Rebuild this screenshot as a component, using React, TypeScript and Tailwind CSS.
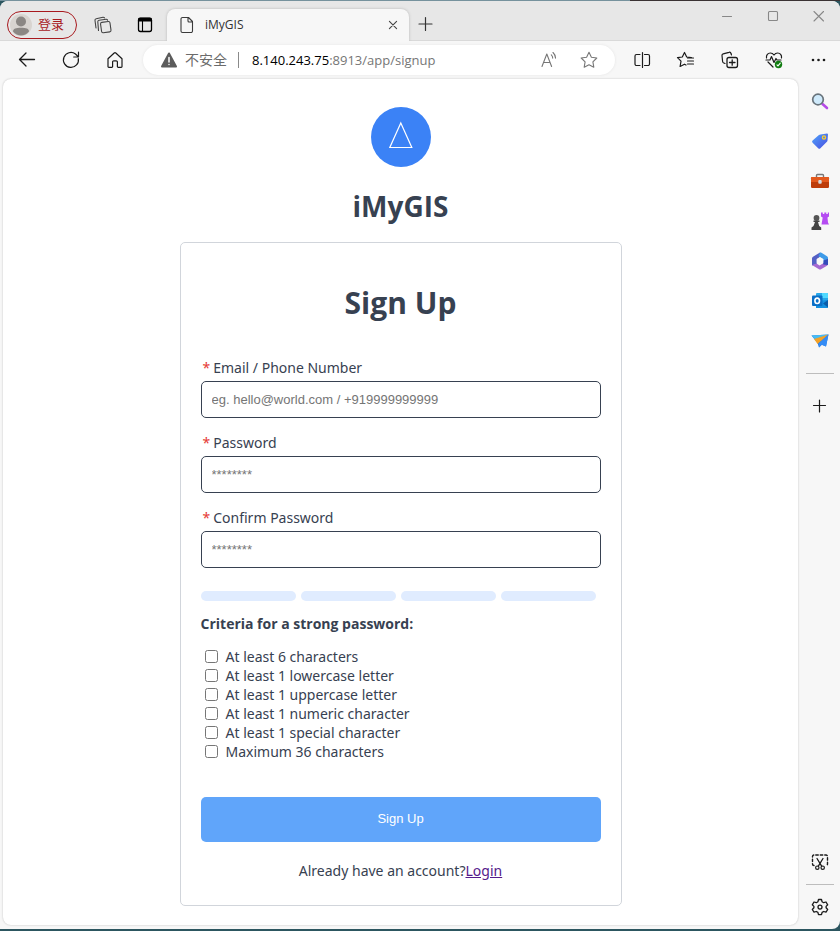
import type { ReactNode } from "react";

function Icon({ children, size = 20, color = "#1b1b1b" }: { children: ReactNode; size?: number; color?: string }) {
  return (
    <svg
      width={size}
      height={size}
      viewBox="0 0 20 20"
      fill="none"
      stroke={color}
      strokeWidth={1.1}
      strokeLinecap="round"
      strokeLinejoin="round"
      aria-hidden="true"
      className="shrink-0"
    >
      {children}
    </svg>
  );
}

function ToolButton({ label, children }: { label: string; children: ReactNode }) {
  return (
    <button type="button" aria-label={label} className="flex h-9 w-11 shrink-0 items-center justify-center">
      {children}
    </button>
  );
}

function TitleBar() {
  return (
    <header className="flex h-10 items-stretch border-b border-[#d9d9d9] bg-[#e7e7e7] pl-[7px]">
      <button
        type="button"
        className="mt-[10px] flex h-7 w-[70px] shrink-0 items-center gap-[6px] rounded-full border border-[#a8191e] pl-[2px] text-[13px] text-[#a8191e]"
      >
        <svg width="22" height="22" viewBox="0 0 22 22" aria-hidden="true">
          <circle cx="11" cy="11" r="11" fill="#d8d4d0" />
          <circle cx="11" cy="7.500" r="5" fill="#8b8784" />
          <path d="M3 17.500c0-3 3-3.800 8-3.800s8 .8 8 3.800c-2 2.600-5 4-8 4s-6-1.400-8-4z" fill="#8b8784" />
        </svg>
        <span>登录</span>
      </button>
      <button type="button" aria-label="Workspaces" className="mt-2 ml-4 flex w-5 shrink-0 items-center justify-center">
        <Icon color="#444">
          <rect x="8" y="7" width="9.500" height="10.500" rx="1.500" transform="rotate(-8 12 12)" />
          <path d="M5.500 15.500 4.800 6.800a1.500 1.500 0 0 1 1.300-1.600L13 4.200a1.500 1.500 0 0 1 1.600 1M3 13 2 5.500a1.500 1.500 0 0 1 1.200-1.700L10 2.200a1.500 1.500 0 0 1 1.500.7" />
        </Icon>
      </button>
      <button type="button" aria-label="Tab actions" className="mt-2 ml-[22px] flex w-5 shrink-0 items-center justify-center">
        <Icon color="#000">
          <rect x="3.500" y="3.500" width="13" height="13" rx="2" strokeWidth="1.300" />
          <path d="M3.500 4.500a1.500 1.500 0 0 1 1.500-1.500h10a1.500 1.500 0 0 1 1.500 1.500V6h-13z" fill="#000" />
          <path d="M7.500 6v10.500" />
        </Icon>
      </button>
      <div className="mt-2 -mb-px ml-3 flex w-[242px] items-center rounded-t-lg bg-[#f7f7f7] pr-2 pl-[10px] shadow-[0_0_3px_#b5b5b5] [clip-path:inset(-4px_-4px_0_-4px)]">
        <Icon color="#3b3b3b">
          <path d="M5.500 2.500h6l4 4V16a1.500 1.500 0 0 1-1.500 1.500H5.500A1.500 1.500 0 0 1 4 16V4a1.500 1.500 0 0 1 1.500-1.500zM11 2.500V6a1 1 0 0 0 1 1h3.500" />
        </Icon>
        <span className="ml-2 flex-1 text-xs text-[#333]">iMyGIS</span>
        <button type="button" aria-label="Close tab" className="flex size-4 items-center justify-center">
          <Icon size={16} color="#444">
            <path d="m5.500 5.500 9 9M14.500 5.500l-9 9" strokeWidth="1.400" />
          </Icon>
        </button>
      </div>
      <button type="button" aria-label="New tab" className="mt-1 ml-[6px] flex w-5 shrink-0 items-center justify-center">
        <Icon color="#333">
          <path d="M10.500 4.500v13M4 11h13" strokeWidth="1.200" />
        </Icon>
      </button>
      <div className="ml-auto flex h-[30px] items-center">
        <button type="button" aria-label="Minimize" className="flex h-full w-[46px] items-center justify-center">
          <Icon color="#888"><path d="M5.500 10.500h9" /></Icon>
        </button>
        <button type="button" aria-label="Maximize" className="flex h-full w-[46px] items-center justify-center">
          <Icon color="#888"><rect x="5.500" y="5.500" width="9" height="9" rx="1" /></Icon>
        </button>
        <button type="button" aria-label="Close" className="flex h-full w-11 items-center justify-center">
          <Icon color="#888"><path d="m6 5.500 9.500 9.500M15.500 5.500 6 15" /></Icon>
        </button>
      </div>
    </header>
  );
}

function Toolbar() {
  return (
    <nav className="flex h-[38px] items-center pl-[5px]">
      <ToolButton label="Back">
        <Icon><path d="M17.500 9.500h-15M9 3 2.500 9.500 9 16" strokeWidth="1.300" /></Icon>
      </ToolButton>
      <ToolButton label="Refresh">
        <Icon>
          <path d="M17.300 8.500A7.500 7.500 0 1 1 14.500 4l2.500 2.500M17.500 2.200v4.800h-4.800" strokeWidth="1.200" />
        </Icon>
      </ToolButton>
      <ToolButton label="Home">
        <Icon>
          <path d="M3 8.800 9.200 3a1.200 1.200 0 0 1 1.600 0L17 8.800V16.500a.8.800 0 0 1-.8.800h-3a.8.800 0 0 1-.8-.8V12a1.200 1.200 0 0 0-1.200-1.200H8.800A1.200 1.200 0 0 0 7.600 12v4.500a.8.800 0 0 1-.8.800h-3a.8.800 0 0 1-.8-.8z" strokeWidth="1.200" />
        </Icon>
      </ToolButton>
      <div className="ml-[6px] flex h-[30px] min-w-0 flex-1 items-center rounded-full bg-white pr-4 pl-4 text-sm shadow-[0_0_3px_#e4e4e4]">
        <Icon color="#5c5c5c">
          <path d="M10 3.500 17 16.500H3z" fill="#5c5c5c" strokeWidth="2" />
          <path d="M10 7.500v4.500M10 14.500v.1" stroke="#fff" strokeWidth="1.500" />
        </Icon>
        <span className="ml-[6px] text-[#6b6b6b]">不安全</span>
        <span className="mx-[11px] h-4 w-px bg-[#8a8a8a]" />
        <span className="ml-[2px] min-w-0 flex-1 truncate text-[13px] text-[#767676]">
          <span className="text-black">8.140.243.75</span>:8913/app/signup
        </span>
        <button type="button" aria-label="Read aloud">
          <Icon color="#777">
            <path d="m3 16.500 4.800-12.500L12.600 16.500M4.600 12.500h6.400" />
            <path d="M12.300 4.800c1 .9 1.400 2 1.400 3.300M14 2.500c1.600 1.500 2.500 3.400 2.500 5.600" />
          </Icon>
        </button>
        <button type="button" aria-label="Add to favorites" className="ml-5">
          <Icon color="#777">
            <path d="m10 2.300 2.400 4.900 5.400.8-3.900 3.800.9 5.400L10 14.700l-4.800 2.500.9-5.400L2.200 8l5.400-.8z" />
          </Icon>
        </button>
      </div>
      <div className="ml-[5px] flex">
        <ToolButton label="Split screen">
          <Icon>
            <path d="M8 4.500H4.500A1.500 1.500 0 0 0 3 6v8a1.500 1.500 0 0 0 1.500 1.500H8M12.500 4.500H16A1.500 1.500 0 0 1 17.500 6v8a1.500 1.500 0 0 1-1.500 1.500h-3.500M10.500 2.500v15" strokeWidth="1.200" />
          </Icon>
        </ToolButton>
        <ToolButton label="Favorites">
          <Icon>
            <path d="M15.500 7.500 10.700 7 8.500 2.500 6.300 7 1.500 7.700 5 11.200l-.9 5.300 4.400-2.300 1.500.8M11.500 8h6M11.500 11h6M11.500 14h6" strokeWidth="1.200" />
          </Icon>
        </ToolButton>
        <ToolButton label="Collections">
          <Icon>
            <path d="M5 13.500 3.800 13a2 2 0 0 1-1.200-1.500L2 5.500a1.500 1.500 0 0 1 1.200-1.600L9 2.300a1.500 1.500 0 0 1 1.900 1L11.500 5" strokeWidth="1.200" />
            <rect x="7" y="7.500" width="10.500" height="10" rx="2" strokeWidth="1.300" />
            <path d="M12.200 9.800v5.400M9.500 12.500H15" strokeWidth="1.300" />
          </Icon>
        </ToolButton>
        <ToolButton label="Browser essentials">
          <Icon>
            <path d="M2.500 8C2 4.800 4 3 6.300 3 8 3 9.300 4 10 5c.7-1 2-2 3.700-2C16 3 18 4.800 17.500 8M4 12l5 5M2 10h4l1.500-3.500 2.500 6 2-4 .9 1.500H17" strokeWidth="1.200" />
            <circle cx="14.500" cy="14.500" r="3.700" fill="#107c10" stroke="none" />
            <path d="m13 14.800 1 1 2.300-2.600" stroke="#fff" />
          </Icon>
        </ToolButton>
        <ToolButton label="Settings and more">
          <Icon>
            <g fill="#1b1b1b" stroke="none">
              <circle cx="5" cy="10" r="1.300" />
              <circle cx="10.500" cy="10" r="1.300" />
              <circle cx="16" cy="10" r="1.300" />
            </g>
          </Icon>
        </ToolButton>
      </div>
    </nav>
  );
}

function SideButton({ label, children }: { label: string; children: ReactNode }) {
  return (
    <button type="button" aria-label={label} className="flex h-10 w-10 items-center justify-center">
      {children}
    </button>
  );
}

function Sidebar() {
  return (
    <aside className="flex w-[41px] shrink-0 flex-col items-center pt-[2px]">
      <SideButton label="Search">
        <Icon>
          <path d="m12.500 13 4.500 4" stroke="#b54be8" strokeWidth="2.600" />
          <circle cx="8" cy="8.500" r="5.300" fill="#cfeafb" stroke="#69747c" strokeWidth="1.700" />
        </Icon>
      </SideButton>
      <SideButton label="Shopping">
        <Icon>
          <path d="M10.500 3.500 17 2.500a1 1 0 0 1 1 1l-.5 6a2 2 0 0 1-.6 1.200l-6.500 6.500a1.500 1.500 0 0 1-2.200 0L2.600 11.800a1.500 1.500 0 0 1 0-2.200l6-5.400a3 3 0 0 1 1.900-.7z" fill="url(#tag)" stroke="none" />
          <circle cx="14" cy="6.500" r="1.600" fill="#4b83f0" stroke="#ffcf2e" strokeWidth="1.300" />
          <defs>
            <linearGradient id="tag" x1="0" y1="0" x2="1" y2="1">
              <stop stopColor="#50a5fb" />
              <stop offset="1" stopColor="#4a4de0" />
            </linearGradient>
          </defs>
        </Icon>
      </SideButton>
      <SideButton label="Tools">
        <Icon>
          <path d="M6.500 6V4.500a1 1 0 0 1 1-1h5a1 1 0 0 1 1 1V6" stroke="#777" strokeWidth="1.400" />
          <rect x="1" y="6" width="18" height="11" rx="1.300" fill="#bd3d0b" stroke="none" />
          <path d="M1 7a1 1 0 0 1 1-1h16a1 1 0 0 1 1 1v4H1z" fill="#e3591e" stroke="none" />
          <rect x="8.300" y="9" width="3.400" height="3.800" rx="1" fill="#d6dce0" stroke="none" />
        </Icon>
      </SideButton>
      <SideButton label="Games">
        <Icon>
          <path d="M11 1.500h1.800V3h1.500V1.500h2V3h1.500V1.500H19v4l-1.500 1 .5 5 1 2h-7.500l1.200-7L11 5.500z" fill="#b54cf2" stroke="none" />
          <circle cx="6.500" cy="7" r="2.900" fill="#555" stroke="none" />
          <path d="M3.500 9.500h6v1.400H8l1.200 4.100 2 1.500V19H1.500v-2.500l2-1.500L5 10.900H3.500z" fill="#444" stroke="none" />
        </Icon>
      </SideButton>
      <SideButton label="Microsoft 365">
        <Icon>
          <path d="M10 1.500 3 5.700A2 2 0 0 0 2 7.500v7l4.700-1.200V8L13 4z" fill="#5460c5" stroke="none" />
          <path d="M10 1.500a2 2 0 0 1 1.500.3L17 5.200a2 2 0 0 1 1 1.800v6L13.300 14V8L8.500 5.300z" fill="#3e9be8" stroke="none" />
          <path d="m2 14 7 4.200a2 2 0 0 0 2 0l6-3.500a2 2 0 0 0 1-1.700V9.500l-4.700 2.700-3.800 2.300-3-2z" fill="#a568d2" stroke="none" />
          <path d="m18 8-4.700 1.500v4L18 14z" fill="#344aba" stroke="none" />
          <path d="m6.800 8.200 3.200-1.900 3.300 1.900v3.600L10 13.700l-3.200-1.900z" fill="#f7f7f7" stroke="none" />
        </Icon>
      </SideButton>
      <SideButton label="Outlook">
        <Icon>
          <rect x="6" y="2" width="12" height="15" rx="1" fill="#28a8ea" stroke="none" />
          <path d="M12 2h5a1 1 0 0 1 1 1v4h-6z" fill="#50d9ff" stroke="none" />
          <path d="m6 10 12-1v7a1 1 0 0 1-1 1H6z" fill="#1490df" stroke="none" />
          <path d="m18 9-5 3.500 5 4z" fill="#0a5ca8" stroke="none" />
          <rect x="2" y="4.500" width="10.500" height="10.500" rx="1" fill="#0a6fc7" stroke="none" />
          <ellipse cx="7.200" cy="9.800" rx="2.300" ry="2.700" stroke="#fff" strokeWidth="1.600" />
        </Icon>
      </SideButton>
      <SideButton label="Drop">
        <Icon>
          <path d="M1.500 4.500 18.500 3.500 16 15.500l-4-1.800-3 2.800-1.500-4.500z" fill="#2679df" stroke="none" />
          <path d="m1.500 4.500 17-1L6 9.500z" fill="#47bcf4" stroke="none" />
          <path d="M18.500 3.500 4 8l3.600 5z" fill="#f3a126" stroke="none" />
          <path d="m18.500 3.500-9.700 8.700.2 4.300 2.500-2.700 4.500 1.700z" fill="#348cf5" stroke="none" />
        </Icon>
      </SideButton>
      <span className="mt-3 h-px w-7 bg-[#bdbdbd]" />
      <div className="mt-3">
        <SideButton label="Customize">
          <Icon><path d="M9.500 4v12M3.500 9.500h12" strokeWidth="1.200" /></Icon>
        </SideButton>
      </div>
      <div className="mt-auto">
        <SideButton label="Screenshot">
          <Icon>
            <path d="M4 13.500A1.500 1.500 0 0 1 2.500 12V4.500A1.500 1.500 0 0 1 4 3h12a1.500 1.500 0 0 1 1.500 1.500V12a1.500 1.500 0 0 1-1.500 1.500" strokeDasharray="2.500 2" strokeWidth="1.400" />
            <path d="m7 6.500 4.800 7.800M13 6.500l-4.800 7.800" strokeWidth="1.300" />
            <circle cx="7.300" cy="15.700" r="1.700" strokeWidth="1.200" />
            <circle cx="12.700" cy="15.700" r="1.700" strokeWidth="1.200" />
          </Icon>
        </SideButton>
      </div>
      <span className="mt-[2px] h-px w-7 bg-[#bdbdbd]" />
      <div className="mt-[2px] mb-[2px]">
        <SideButton label="Settings">
          <Icon>
            <path d="M8.500 2.500h3l.6 2.300 1.500.9 2.400-.7 1.700 2.800-1.600 1.600v1.400l1.600 1.700-1.700 2.700-2.300-.7-1.600.9-.6 2.300h-3l-.6-2.300-1.600-.9-2.300.7-1.700-2.700 1.600-1.700V9.400L2.300 7.800 4 5l2.400.7 1.500-.9z" strokeWidth="1.300" />
            <circle cx="10" cy="10.100" r="2" strokeWidth="1.300" />
          </Icon>
        </SideButton>
      </div>
    </aside>
  );
}

function Field({ id, label, type, placeholder }: { id: string; label: string; type: string; placeholder: string }) {
  return (
    <div className="mb-[15px] flex flex-col gap-[3px]">
      <label htmlFor={id} className="flex gap-[3px] pl-[2px] leading-5">
        <span className="text-[#e53935]">*</span>
        {label}
      </label>
      <input
        id={id}
        type={type}
        placeholder={placeholder}
        className="h-[37px] w-full rounded-[5px] border border-[#374151] bg-white px-[10px] font-[Liberation_Sans] text-[13px] text-[#374151] placeholder:text-[#757575]"
      />
    </div>
  );
}

const criteria = [
  "At least 6 characters",
  "At least 1 lowercase letter",
  "At least 1 uppercase letter",
  "At least 1 numeric character",
  "At least 1 special character",
  "Maximum 36 characters",
];

function SignUpForm() {
  return (
    <form className="w-full max-w-[442px] rounded-[5px] border border-[#d1d5db] px-5 pt-10 pb-6">
      <h1 className="mb-[35px] text-center font-['Open_Sans'] text-[30px] leading-10 font-bold">Sign Up</h1>
      <Field id="account" label="Email / Phone Number" type="text" placeholder="eg. hello@world.com / +919999999999" />
      <Field id="password" label="Password" type="password" placeholder="********" />
      <Field id="confirm" label="Confirm Password" type="password" placeholder="********" />
      <div className="mt-[23px] grid grid-cols-4 gap-[5px] pr-[5px]">
        {[0, 1, 2, 3].map((n) => (
          <span key={n} className="h-[10px] rounded-full bg-[#e0ecff]" />
        ))}
      </div>
      <p className="mt-[13px] font-['Open_Sans'] text-sm leading-5 font-bold">Criteria for a strong password:</p>
      <ul className="mt-[13px]">
        {criteria.map((text) => (
          <li key={text}>
            <label className="flex h-[19px] items-center gap-2 pl-1">
              <input type="checkbox" className="size-[13px]" />
              {text}
            </label>
          </li>
        ))}
      </ul>
      <button
        type="button"
        className="mt-9 h-[45px] w-full rounded-[5px] bg-[#60a5fa] font-[Liberation_Sans] text-[13px] text-white"
      >
        Sign Up
      </button>
      <p className="mt-[19px] text-center leading-5">
        Already have an account?
        <a href="#login" className="text-[#551a8b] underline">Login</a>
      </p>
    </form>
  );
}

export default function App() {
  return (
    <div className="flex min-h-screen flex-col bg-[#2c5660] font-['Open_Sans','Noto_Sans_CJK_SC',sans-serif]">
      <div className="flex h-px">
        <span className="w-3/4 bg-[#76929d]" />
        <span className="flex-1 bg-[#3a3334]" />
      </div>
      <div className="mb-[2px] flex flex-1 flex-col overflow-hidden rounded-t-lg rounded-br-lg bg-[#f7f7f7]">
        <TitleBar />
        <Toolbar />
        <div className="flex flex-1">
          <main className="mb-1 ml-[3px] mr-px flex min-w-0 flex-1 flex-col items-center rounded-lg bg-white px-4 pt-7 pb-[19px] font-['Noto_Sans'] text-sm text-[#374151] shadow-[0_0_2px_#bbb]">
            <svg width="60" height="60" viewBox="0 0 60 60" role="img" aria-label="iMyGIS logo">
              <circle cx="30" cy="30" r="30" fill="#3b82f6" />
              <path d="M29.800 16 40.800 40.500H18.800z" fill="none" stroke="#fff" strokeWidth="1.200" />
            </svg>
            <h2 className="mt-[19px] mb-4 font-['Open_Sans'] text-[28px] leading-10 font-bold">iMyGIS</h2>
            <SignUpForm />
          </main>
          <Sidebar />
        </div>
      </div>
    </div>
  );
}
